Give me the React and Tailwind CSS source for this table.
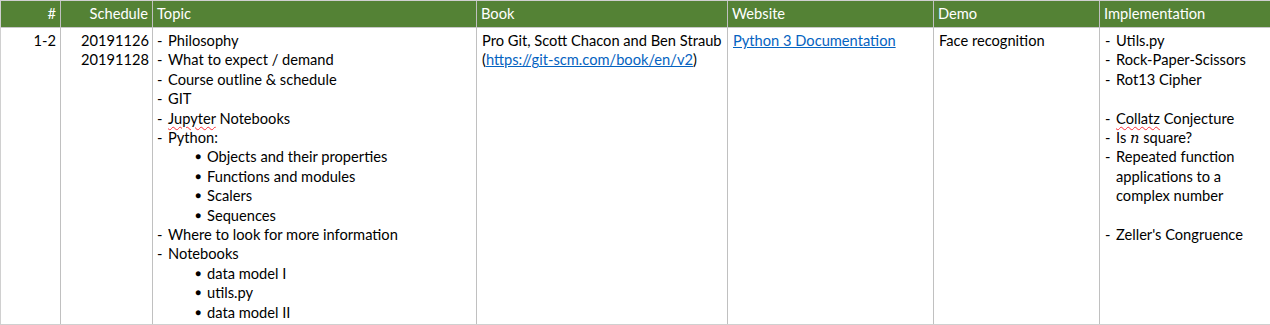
import React from 'react';

const headers = [
  { label: '#', align: 'text-right' },
  { label: 'Schedule', align: 'text-right' },
  { label: 'Topic', align: 'text-left' },
  { label: 'Book', align: 'text-left' },
  { label: 'Website', align: 'text-left' },
  { label: 'Demo', align: 'text-left' },
  { label: 'Implementation', align: 'text-left' },
];

const Dash = ({ children }) => (
  <div className="flex">
    <span className="w-[11px] shrink-0">-</span>
    <span>{children}</span>
  </div>
);

const Dot = ({ children }) => (
  <div className="flex pl-[38px]">
    <span className="w-[12px] shrink-0 text-[10px] leading-[19.4px]">●</span>
    <span>{children}</span>
  </div>
);

const Squiggle = ({ children }) => (
  <span className="underline decoration-wavy decoration-red-500 decoration-1 underline-offset-2">{children}</span>
);

const App = () => {
  return (
    <div className="w-[1270px] h-[325px] bg-white overflow-hidden text-[14.67px] leading-[19.4px] text-black" style={{ fontFamily: 'Lato, "Open Sans", sans-serif' }}>
      <div className="border-t border-l border-b border-[#d0d0d0] h-[325px]">
        <div className="grid grid-cols-[60px_92px_324px_251px_206px_166px_1fr] h-full grid-rows-[27px_1fr]">
          {headers.map((h, i) => (
            <div
              key={h.label}
              className={`bg-[#548235] text-white px-[4px] flex items-center border-b border-[#c8c8c8] ${h.align} ${i < headers.length - 1 ? 'border-r border-r-[#c0c0c0]' : ''} ${h.align === 'text-right' ? 'justify-end' : ''}`}
            >
              {h.label}
            </div>
          ))}

          <div className="border-r border-[#c0c0c0] text-right px-[4px] pt-[3px]">1-2</div>

          <div className="border-r border-[#c0c0c0] text-right px-[3px] pt-[3px]">
            <div>20191126</div>
            <div>20191128</div>
          </div>

          <div className="border-r border-[#c0c0c0] px-[4px] pt-[3px]">
            <Dash>Philosophy</Dash>
            <Dash>What to expect / demand</Dash>
            <Dash>Course outline &amp; schedule</Dash>
            <Dash>GIT</Dash>
            <Dash><Squiggle>Jupyter</Squiggle> Notebooks</Dash>
            <Dash>Python:</Dash>
            <Dot>Objects and their properties</Dot>
            <Dot>Functions and modules</Dot>
            <Dot>Scalers</Dot>
            <Dot>Sequences</Dot>
            <Dash>Where to look for more information</Dash>
            <Dash>Notebooks</Dash>
            <Dot>data model I</Dot>
            <Dot>utils.py</Dot>
            <Dot>data model II</Dot>
          </div>

          <div className="border-r border-[#c0c0c0] px-[5px] pt-[3px] whitespace-nowrap overflow-hidden">
            <div>Pro Git, Scott Chacon and Ben Straub</div>
            <div>
              (<span className="text-[#0563c1] underline">https://git-scm.com/book/en/v2</span>)
            </div>
          </div>

          <div className="border-r border-[#c0c0c0] px-[5px] pt-[3px]">
            <span className="text-[#0563c1] underline">Python 3 Documentation</span>
          </div>

          <div className="border-r border-[#c0c0c0] px-[5px] pt-[3px]">Face recognition</div>

          <div className="px-[5px] pt-[3px]">
            <Dash>Utils.py</Dash>
            <Dash>Rock-Paper-Scissors</Dash>
            <Dash>Rot13 Cipher</Dash>
            <div className="h-[19.4px]" />
            <Dash><Squiggle>Collatz</Squiggle> Conjecture</Dash>
            <Dash>
              Is <span className="italic" style={{ fontFamily: '"DejaVu Serif", serif' }}>n</span> square?
            </Dash>
            <Dash>Repeated function applications to a complex number</Dash>
            <div className="h-[19.4px]" />
            <Dash>Zeller's Congruence</Dash>
          </div>
        </div>
      </div>
    </div>
  );
};

export default App;
